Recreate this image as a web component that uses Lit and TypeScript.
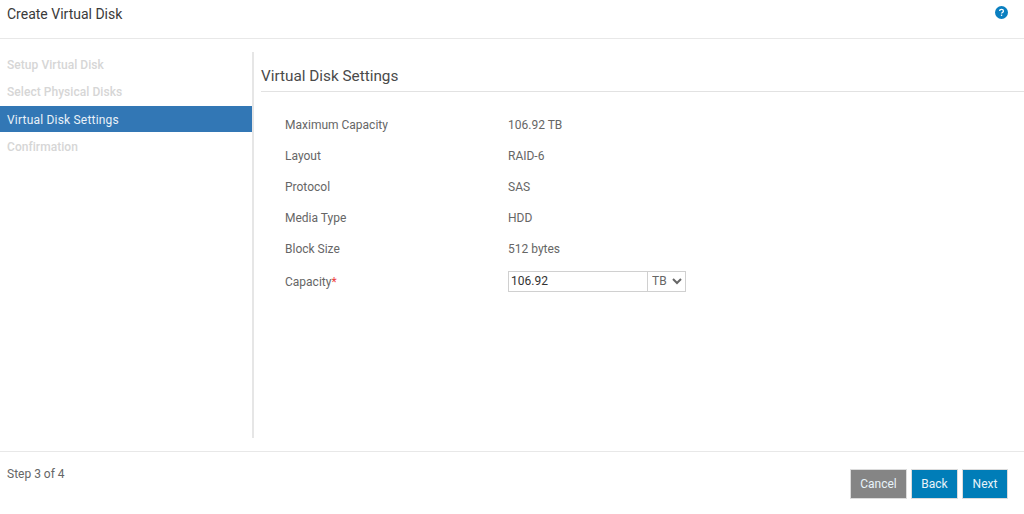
import { LitElement, html, css } from "lit";
import { customElement } from "lit/decorators.js";

const rows: [string, string][] = [
  ["Maximum Capacity", "106.92 TB"],
  ["Layout", "RAID-6"],
  ["Protocol", "SAS"],
  ["Media Type", "HDD"],
  ["Block Size", "512 bytes"],
];

@customElement("app-root")
export class AppRoot extends LitElement {
  static styles = css`
    :host {
      display: block;
      width: 1024px;
      height: 514px;
      background: #fff;
      font-family: Roboto, "Liberation Sans", sans-serif;
      font-size: 12px;
      color: #666;
      overflow: hidden;
    }
    .header {
      height: 39px;
      box-sizing: border-box;
      border-bottom: 1px solid #e8e8e8;
      display: flex;
      justify-content: space-between;
      padding: 5px 16px 0 7px;
    }
    .header h1 {
      margin: 0;
      font-size: 14px;
      font-weight: 400;
      line-height: 18px;
      color: #3a3a3a;
    }
    .help {
      width: 13px;
      height: 13px;
      margin-top: 1px;
    }
    .main {
      display: flex;
      height: 386px;
      margin-top: 13px;
      margin-bottom: 13px;
    }
    .side {
      width: 252px;
      border-right: 2px solid #e6e6e6;
      flex: none;
    }
    .step {
      height: 27px;
      line-height: 27px;
      padding-left: 7px;
      color: #d6d6d6;
      font-weight: 500;
      letter-spacing: 0.05px;
    }
    .step.active {
      background: #3277b5;
      color: #e9f1f8;
      font-weight: 400;
      letter-spacing: 0.2px;
      height: 26px;
      line-height: 28px;
      margin-bottom: 2px;
    }
    .content {
      flex: 1;
      padding: 14px 0 0 7px;
    }
    h2 {
      margin: 0;
      font-size: 15.3px;
      font-weight: 400;
      line-height: 20px;
      height: 25px;
      color: #4a4a4a;
      border-bottom: 1px solid #e2e2e2;
    }
    .grid {
      display: grid;
      grid-template-columns: 223px auto;
      justify-content: start;
      grid-auto-rows: 31px;
      align-items: center;
      padding: 17px 0 0 24px;
    }
    .star {
      color: #ee3b3b;
    }
    .field {
      display: flex;
      align-items: center;
      margin-top: 3px;
    }
    .cap-label {
      margin-top: 4px;
    }
    input {
      width: 140px;
      height: 21px;
      box-sizing: border-box;
      border: 1px solid #d0d0d0;
      padding: 0 9px 0 2px;
      font: 400 12px Roboto, "Liberation Sans", sans-serif;
      color: #333;
      outline: none;
    }
    select {
      width: 38px;
      height: 21px;
      box-sizing: border-box;
      border: 1px solid #d0d0d0;
      border-left: 0;
      background: #fff;
      padding: 0;
      font: 400 12px Roboto, "Liberation Sans", sans-serif;
      color: #666;
      outline: none;
    }
    .footer {
      height: 63px;
      box-sizing: border-box;
      border-top: 1px solid #e8e8e8;
      display: flex;
      justify-content: space-between;
      padding: 14px 16px 0 7px;
    }
    .count {
      line-height: 16px;
    }
    .btns {
      display: flex;
      gap: 4px;
      margin-top: 3px;
      height: 30px;
    }
    button {
      border: 1px solid #dcdcdc;
      background: #007db8;
      color: #e8f3f9;
      font: 400 12px Roboto, "Liberation Sans", sans-serif;
      padding: 0;
      width: 47px;
      height: 30px;
    }
    button.cancel {
      background: #858585;
      width: 57px;
    }
    button.next {
      width: 46px;
    }
  `;

  render() {
    return html`
      <div class="header">
        <h1>Create Virtual Disk</h1>
        <svg class="help" viewBox="0 0 13 13">
          <circle cx="6.5" cy="6.5" r="6.5" fill="#0a7fc0"></circle>
          <path d="M4.6 5.1c0-1.1.9-1.7 1.9-1.7s1.9.6 1.9 1.6c0 .8-.5 1.2-1 1.5-.5.3-.8.6-.8 1.1" fill="none" stroke="#fff" stroke-width="1.3"></path>
          <rect x="5.9" y="8.6" width="1.3" height="1.3" fill="#fff"></rect>
        </svg>
      </div>
      <div class="main">
        <div class="side">
          <div class="step">Setup Virtual Disk</div>
          <div class="step">Select Physical Disks</div>
          <div class="step active">Virtual Disk Settings</div>
          <div class="step">Confirmation</div>
        </div>
        <div class="content">
          <h2>Virtual Disk Settings</h2>
          <div class="grid">
            ${rows.map(([k, v]) => html`<div>${k}</div><div>${v}</div>`)}
            <div class="cap-label">Capacity<span class="star">*</span></div>
            <div class="field">
              <input .value=${"106.92"} />
              <select><option>TB</option><option>GB</option></select>
            </div>
          </div>
        </div>
      </div>
      <div class="footer">
        <div class="count">Step 3 of 4</div>
        <div class="btns">
          <button class="cancel">Cancel</button>
          <button>Back</button>
          <button class="next">Next</button>
        </div>
      </div>
    `;
  }
}
